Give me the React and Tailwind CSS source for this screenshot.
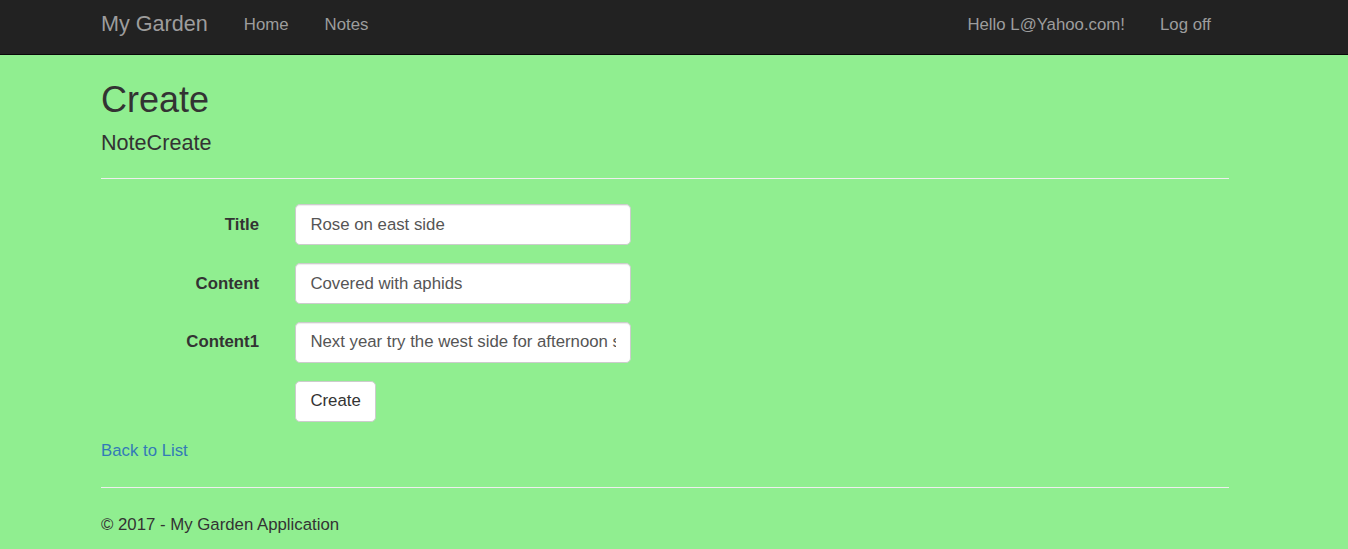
import React from 'react';

const font = { fontFamily: '"Liberation Sans", Arial, sans-serif' };

function Field({ label, value }) {
  return (
    <div className="flex mb-[18px]">
      <label className="w-[158px] pt-[8.4px] leading-[24px] text-right font-bold text-[16.8px] text-[#333]">
        {label}
      </label>
      <div className="pl-[36px]">
        <input
          readOnly
          defaultValue={value}
          className="block w-[336px] h-[40.8px] px-[14.4px] py-[7.2px] leading-[24px] text-[16.8px] text-[#555] bg-white border border-[#ccc] rounded-[4.8px] shadow-[inset_0_1px_1px_rgba(0,0,0,0.075)] outline-none"
          style={font}
        />
      </div>
    </div>
  );
}

export default function App() {
  return (
    <div className="min-h-screen bg-[#90ee90] text-[#333]" style={font}>
      <header className="h-[55px] bg-[#222] border-b border-[#080808]">
        <div className="ml-[101px] w-[1128px] flex">
          <a className="pt-[12px] pr-[18px] leading-[24px] text-[21.6px] text-[#9d9d9d]">My Garden</a>
          <a className="pt-[13px] px-[18px] leading-[24px] text-[16.8px] text-[#9d9d9d]">Home</a>
          <a className="pt-[13px] px-[18px] leading-[24px] text-[16.8px] text-[#9d9d9d]">Notes</a>
          <div className="ml-auto flex">
            <a className="pt-[13px] pl-[16px] pr-[18px] leading-[24px] text-[16.8px] text-[#9d9d9d]">Hello L@Yahoo.com!</a>
            <a className="pt-[13px] pl-[17px] pr-[18px] leading-[24px] text-[16.8px] text-[#9d9d9d]">Log off</a>
          </div>
        </div>
      </header>

      <main className="ml-[101px] w-[1128px]">
        <h2 className="mt-[25px] text-[36px] leading-[39.6px]">Create</h2>
        <h4 className="mt-[11px] text-[21.6px] leading-[23.76px]">NoteCreate</h4>
        <hr className="mt-[24px] mb-[25px] border-0 border-t border-[#eee]" />

        <form>
          <Field label="Title" value="Rose on east side" />
          <Field label="Content" value="Covered with aphids" />
          <Field label="Content1" value="Next year try the west side for afternoon sun" />
          <div className="flex mb-[17px]">
            <div className="w-[194px]" />
            <button
              type="button"
              className="h-[40.8px] px-[14.4px] leading-[24px] text-[16.8px] text-[#333] bg-white border border-[#ccc] rounded-[4.8px]"
              style={font}
            >
              Create
            </button>
          </div>
        </form>

        <div className="leading-[24px] text-[16.8px]">
          <a className="text-[#337ab7]">Back to List</a>
        </div>

        <hr className="mt-[24px] mb-[25px] border-0 border-t border-[#eee]" />
        <footer>
          <p className="leading-[24px] text-[16.8px]">© 2017 - My Garden Application</p>
        </footer>
      </main>
    </div>
  );
}
